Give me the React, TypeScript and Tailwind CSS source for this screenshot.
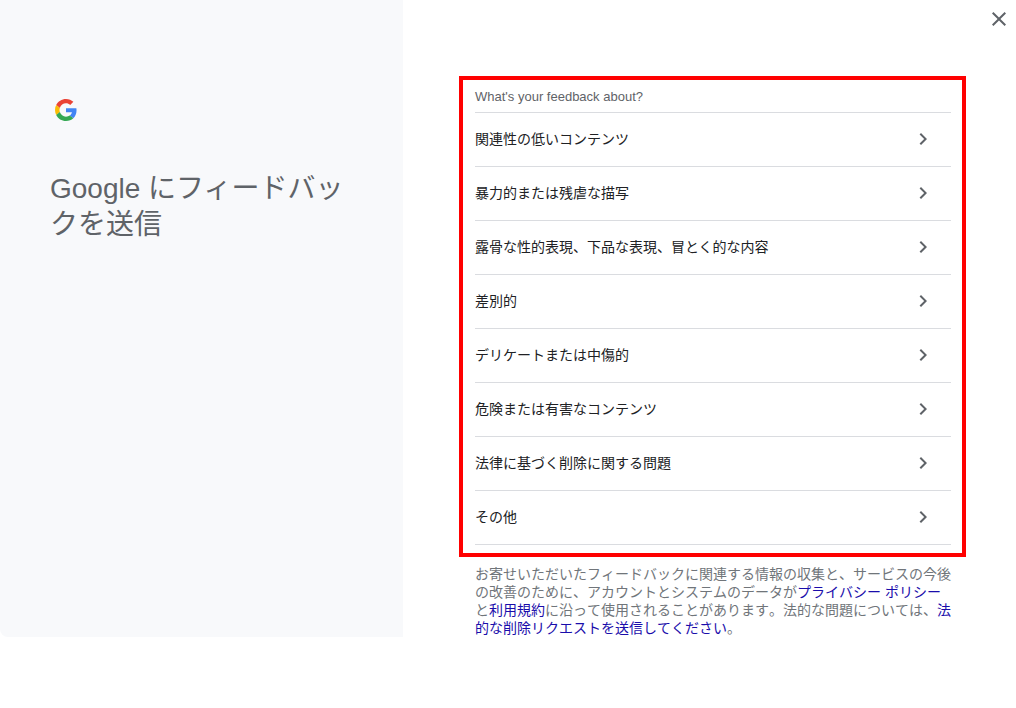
const FONT = "[font-family:'Liberation_Sans','Noto_Sans_CJK_JP',sans-serif]";

const items = [
    "関連性の低いコンテンツ",
    "暴力的または残虐な描写",
    "露骨な性的表現、下品な表現、冒とく的な内容",
    "差別的",
    "デリケートまたは中傷的",
    "危険または有害なコンテンツ",
    "法律に基づく削除に関する問題",
    "その他",
];

function GoogleLogo() {
    return (
        <svg width="22" height="22" viewBox="0 0 48 48" className="block">
            <path fill="#EA4335" d="M24 9.5c3.54 0 6.71 1.22 9.21 3.6l6.85-6.85C35.9 2.38 30.47 0 24 0 14.62 0 6.51 5.38 2.56 13.22l7.98 6.19C12.43 13.72 17.74 9.5 24 9.5z" />
            <path fill="#4285F4" d="M46.98 24.55c0-1.57-.15-3.09-.38-4.55H24v9.02h12.94c-.58 2.96-2.26 5.48-4.78 7.18l7.73 6c4.51-4.18 7.09-10.36 7.09-17.65z" />
            <path fill="#FBBC05" d="M10.53 28.59c-.48-1.45-.76-2.99-.76-4.59s.27-3.14.76-4.59l-7.98-6.19C.92 16.46 0 20.12 0 24c0 3.88.92 7.54 2.56 10.78l7.97-6.19z" />
            <path fill="#34A853" d="M24 48c6.48 0 11.93-2.13 15.89-5.81l-7.73-6c-2.15 1.45-4.92 2.3-8.16 2.3-6.26 0-11.57-4.22-13.47-9.91l-7.98 6.19C6.51 42.62 14.62 48 24 48z" />
        </svg>
    );
}

export default function App() {
    return (
        <div className={`flex h-[708px] w-full bg-white ${FONT}`}>
            <aside className="h-[637px] w-[403px] shrink-0 rounded-bl-[8px] bg-[#f8f9fb] pt-[99px] pr-[50px] pl-[50px]">
                <div className="ml-[5px]">
                    <GoogleLogo />
                </div>
                <h1 className="mt-[50px] text-[28px] leading-[36px] font-normal text-[#5f6368]">
                    Google にフィードバックを送信
                </h1>
            </aside>

            <main className="flex flex-1 flex-col pl-[56px]">
                <button className="mt-[7px] mr-[5px] self-end text-[#5f6368]">
                    <svg width="24" height="24" viewBox="0 0 24 24" className="block">
                        <path fill="currentColor" d="M19 6.41L17.59 5 12 10.59 6.41 5 5 6.41 10.59 12 5 17.59 6.41 19 12 13.41 17.59 19 19 17.59 13.41 12z" />
                    </svg>
                </button>

                <section className="mt-[45px] w-[507px] border-[4px] border-[#ff0000] pr-[11px] pb-[8px] pl-[12px]">
                    <div className="flex h-[33px] items-center border-b border-[#dadce0] pt-[2px] text-[13px] text-[#5f6368]">
                        What's your feedback about?
                    </div>
                    {items.map((item) => (
                        <div key={item} className="flex h-[54px] items-center justify-between border-b border-[#dadce0] pr-[16px] text-[14px] text-[#202124]">
                            <span>{item}</span>
                            <svg width="24" height="24" viewBox="0 0 24 24" className="mb-[1px] block">
                                <path fill="#5f6368" d="M10 6L8.59 7.41 13.17 12l-4.58 4.59L10 18l6-6z" />
                            </svg>
                        </div>
                    ))}
                </section>

                <p className="mt-[8px] w-[507px] pr-[15px] pl-[16px] text-[14px] leading-[18px] text-[#70757a] [font-kerning:none]">
                    お寄せいただいたフィードバックに関連する情報の収集と、サービスの今後の改善のために、アカウントとシステムのデータが<a className="text-[#1a0dab]">プライバシー ポリシー</a>と<a className="text-[#1a0dab]">利用規約</a>に沿って使用されることがあります。法的な問題については、<a className="text-[#1a0dab]">法的な削除リクエストを送信してください</a>。
                </p>
            </main>
        </div>
    );
}
